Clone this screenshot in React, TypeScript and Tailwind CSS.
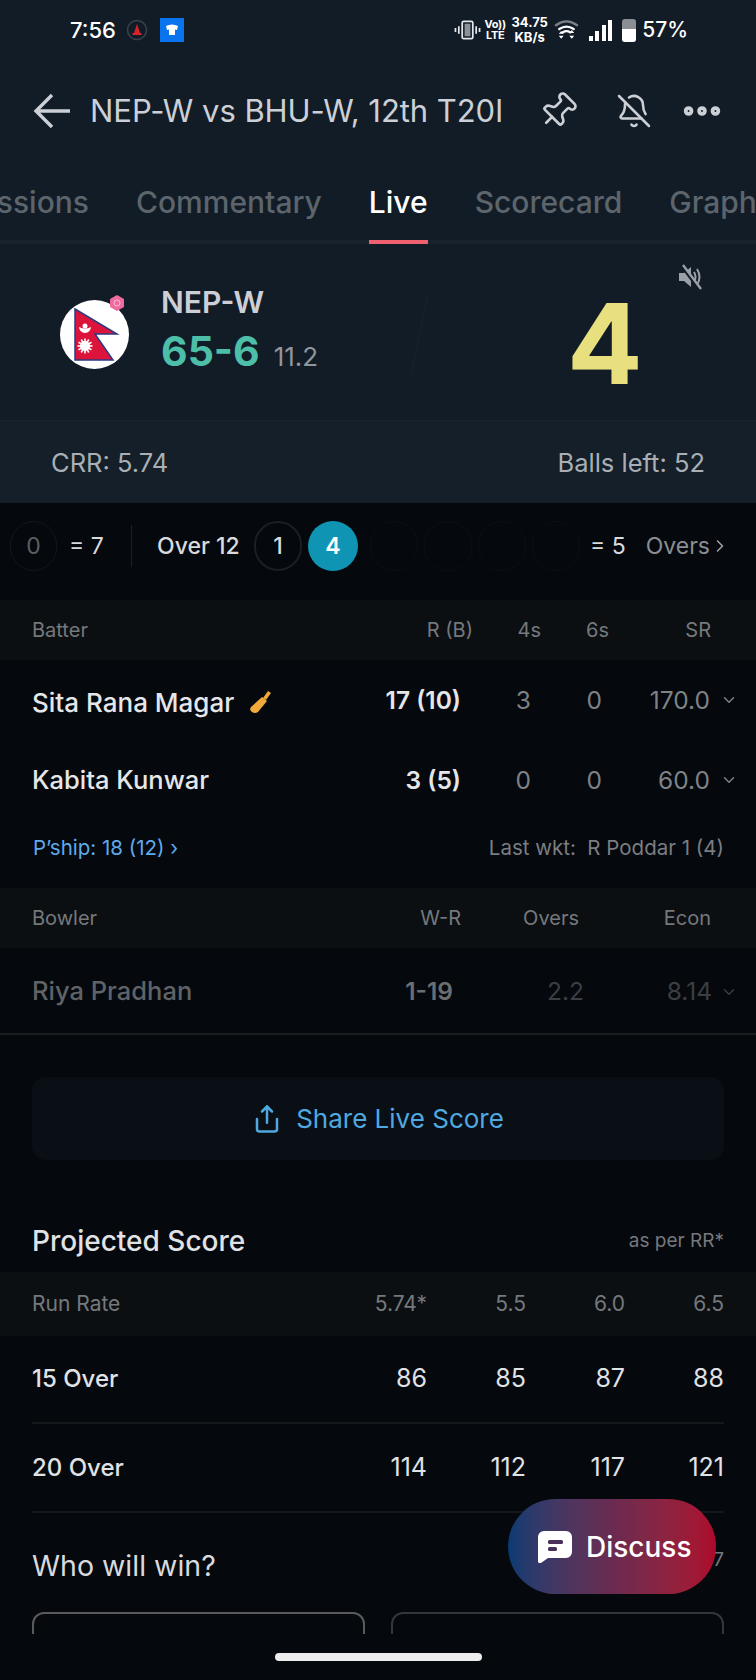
import { BellOff, ChevronDown, ChevronRight, Ellipsis, Pin, Share } from 'lucide-react';

const balls = ['a', 'b', 'c', 'd'];
const sunRays = [0, 30, 60, 90, 120, 150];

function StatusBar() {
  return (
    <div className="h-[60px] flex items-center pl-[70px] text-white">
      <span className="text-[22px] font-medium w-[56px]">7:56</span>
      <svg viewBox="0 0 22 22" className="w-[22px] h-[22px]">
        <circle cx="11" cy="11" r="9.5" fill="none" stroke="#3a424b" strokeWidth="1.5" />
        <path d="M11 5l3 9H8z" fill="#d8232f" />
        <rect x="6.5" y="14" width="9" height="2" fill="#d8232f" />
      </svg>
      <div className="ml-[12px] w-[24px] h-[24px] bg-[#0a74ee] flex items-center justify-center">
        <svg viewBox="0 0 16 16" className="w-[16px] h-[16px]">
          <path d="M2 4q6-3 12 0l-1 4-2-.5V13H5V7.500L3 8z" fill="#fff" />
        </svg>
      </div>
      <div className="flex-1" />
      {/* Vibrate */}
      <svg viewBox="0 0 28 22" className="w-[27px] h-[22px]" fill="none" stroke="#e5e7eb">
        <rect x="8.5" y="2" width="11" height="18" rx="1.5" strokeWidth="1.8" />
        <rect x="11" y="4.5" width="6" height="13" fill="#8b9198" stroke="none" />
        <path d="M5 7v8M1.5 9v4M23 7v8M26.500 9v4" strokeWidth="1.8" />
      </svg>
      <div className="ml-[4px] w-[21px] flex flex-col items-center text-[11px] leading-[11px] font-bold tracking-tight">
        <span>Vo))</span>
        <span>LTE</span>
      </div>
      <div className="ml-[5px] w-[38px] flex flex-col items-center text-[13px] leading-[15px] font-bold">
        <span>34.75</span>
        <span>KB/s</span>
      </div>
      {/* Wifi */}
      <svg viewBox="0 0 26 24" className="ml-[5px] w-[25px] h-[24px]" fill="none" strokeLinecap="round">
        <path d="M2 7q11-8 22 0" stroke="#7b8087" strokeWidth="2.4" />
        <path d="M5.5 11q7.500-5 15 0" stroke="#fff" strokeWidth="2.4" />
        <path d="M9 14.500q4-2.500 8 0" stroke="#fff" strokeWidth="2.400" />
        <path d="M5 17l2.500-3 2.500 3zM5 19h5l-2.500 3zM16 16h5l-2.500-3zM16 19h5l-2.500 3z" fill="#fff" transform="translate(0 -1)" />
      </svg>
      {/* Signal */}
      <div className="ml-[10px] flex items-end gap-[2.5px] h-[22px]">
        <div className="w-[4px] h-[5px] bg-white" />
        <div className="w-[4px] h-[10px] bg-white" />
        <div className="w-[4px] h-[16px] bg-white" />
        <div className="w-[4px] h-[21px] bg-white" />
      </div>
      <div className="ml-[10px] w-[14px] h-[23px] rounded-[3px] bg-[#8b8f94] flex flex-col justify-end overflow-hidden">
        <div className="h-[13px] bg-white" />
      </div>
      <span className="ml-[6px] mr-[68px] text-[21px] font-medium">57%</span>
    </div>
  );
}

function Toolbar() {
  return (
    <div className="h-[102px] flex items-center pl-[33px] text-[#ccd0d6]">
      <svg viewBox="0 0 38 36" className="w-[38px] h-[36px] shrink-0" fill="none" stroke="currentColor" strokeWidth="3.4">
        <path d="M37 18H4M19 2L3 18l16 16" />
      </svg>
      <span className="ml-[19px] text-[31px] tracking-[-0.05px] whitespace-nowrap">NEP-W vs BHU-W, 12th T20I</span>
      <Pin className="ml-[35px] w-[40px] h-[40px] rotate-45 shrink-0" strokeWidth={1.6} />
      <BellOff className="ml-[38px] w-[36px] h-[36px] shrink-0" strokeWidth={1.7} />
      <Ellipsis className="ml-[27px] w-[46px] h-[46px] shrink-0" strokeWidth={3} />
    </div>
  );
}

function Tabs() {
  return (
    <div className="h-[82px] flex overflow-hidden whitespace-nowrap text-[30px] font-medium text-[#5c646c] shadow-[inset_0_-4px_0_#17222c]">
      <div className="w-[89px] shrink-0 flex justify-end items-center pb-[2px]">
        <span>ssions</span>
      </div>
      <div className="ml-[47px] flex items-center pb-[2px]">Commentary</div>
      <div className="relative ml-[47px] flex items-center pb-[2px] text-white">
        Live
        <div className="absolute left-0 right-0 bottom-0 h-[4px] bg-[#f0616f]" />
      </div>
      <div className="ml-[47px] flex items-center pb-[2px]">Scorecard</div>
      <div className="ml-[47px] flex items-center pb-[2px]">Graphs</div>
    </div>
  );
}

function NepalLogo() {
  return (
    <div className="relative w-[69px] h-[69px] rounded-full bg-white flex items-center justify-center">
      <svg viewBox="0 0 69 69" className="w-[69px] h-[69px]">
        <path d="M15 9 L57 34 H35 L53 60 H15 Z" fill="#dc143c" stroke="#2a3a80" strokeWidth="1.5" />
        <path d="M19 27a6 6 0 0 0 12 0q-6 3-12 0z" fill="#fff" />
        <circle cx="25" cy="26" r="2.500" fill="#fff" />
        <circle cx="25" cy="46" r="5" fill="#fff" />
        {sunRays.map((a) => (
          <rect key={a} x="24.200" y="38.500" width="1.600" height="15" fill="#fff" transform={`rotate(${a} 25 46)`} />
        ))}
      </svg>
      <svg viewBox="0 0 16 16" className="absolute -top-[5px] right-[4px] w-[16px] h-[16px]">
        <path d="M8 0l7 4v8l-7 4-7-4V4z" fill="#ef6b9f" />
        <circle cx="8" cy="8" r="3" fill="none" stroke="#f8bcd3" />
      </svg>
    </div>
  );
}

function ScoreCard() {
  return (
    <>
      <div className="relative h-[176px] flex items-start pl-[60px] pt-[56px]">
        <NepalLogo />
        <div className="ml-[32px] -mt-[16px] w-[240px]">
          <div className="text-[30px] leading-[36px] font-semibold text-[#ccd0d6]">NEP-W</div>
          <div className="mt-[6px] flex items-baseline">
            <span className="text-[41px] leading-[50px] font-bold text-[#4dbfa9]">65-6</span>
            <span className="ml-[14px] text-[26px] text-[#8f969d]">11.2</span>
          </div>
        </div>
        <div className="ml-[18px] mt-[-5px] w-[1px] h-[80px] bg-[#18232d] rotate-[12deg]" />
        <div className="ml-[147px] -mt-[22px] text-[112px] leading-[130px] font-bold text-[#e8e07f]">4</div>
        {/* Muted speaker */}
        <svg viewBox="0 0 26 26" className="absolute top-[20px] left-[677px] w-[26px] h-[26px]" fill="none" stroke="#9aa0a6" strokeWidth="2">
          <path d="M2 9h5l7-6v20l-7-6H2z" fill="#9aa0a6" stroke="none" />
          <path d="M17 8q3 5 0 10M20 5q5 8 0 16" />
          <path d="M3.500 1l18 24" stroke="#121c26" strokeWidth="2.400" />
          <path d="M6 1l18 24" strokeWidth="2.400" />
        </svg>
      </div>
      <div className="h-[83px] bg-[#141f29] border-t border-[#17222c] flex items-center justify-between pt-[2px] pl-[51px] pr-[51px] text-[25.5px] text-[#a9afb5]">
        <span>CRR: 5.74</span>
        <span>Balls left: 52</span>
      </div>
    </>
  );
}

function OverRow() {
  return (
    <div className="h-[97px] flex items-center pb-[11px] pl-[10px] text-[23px] text-[#d8dade] overflow-hidden">
      <div className="w-[47px] h-[50px] rounded-full border border-[#14171a] flex items-center justify-center text-[#5c6064]">0</div>
      <span className="ml-[12px] w-[44px] whitespace-nowrap">= 7</span>
      <div className="ml-[18px] w-[1px] h-[42px] bg-[#1c2024]" />
      <span className="ml-[25px] w-[97px] font-medium whitespace-nowrap">Over 12</span>
      <div className="w-[48px] h-[50px] rounded-full border-2 border-[#1b1f23] flex items-center justify-center font-medium">1</div>
      <div className="ml-[6px] w-[50px] h-[50px] rounded-full bg-[#0f94b4] flex items-center justify-center font-semibold text-white">4</div>
      <div className="ml-[12px] flex gap-[6px]">
        {balls.map((b) => (
          <div key={b} className="w-[48px] h-[50px] rounded-full border border-[#0c0f12]" />
        ))}
      </div>
      <span className="ml-[10px] whitespace-nowrap">= 5</span>
      <span className="ml-[20px] text-[#8a8e92] whitespace-nowrap">Overs</span>
      <ChevronRight className="w-[20px] h-[24px] text-[#9a9ea2]" />
    </div>
  );
}

function Batters() {
  return (
    <>
      <div className="h-[60px] bg-[#0c0f12] flex items-center pl-[32px] pr-[45px] text-[20px] text-[#75797d]">
        <span className="flex-1">Batter</span>
        <span className="w-[80px] text-right">R (B)</span>
        <span className="w-[68px] text-right">4s</span>
        <span className="w-[68px] text-right">6s</span>
        <span className="w-[102px] text-right">SR</span>
      </div>
      <BatterRow name="Sita Rana Magar" onStrike score="17 (10)" fours="3" sixes="0" rate="170.0" />
      <BatterRow name="Kabita Kunwar" score="3 (5)" fours="0" sixes="0" rate="60.0" />
      <div className="h-[68px] flex items-center justify-between pb-[12px] pl-[33px] pr-[32px] text-[20.5px]">
        <span className="text-[#5eaaeb]">P’ship: 18 (12) ›</span>
        <span className="text-[#7a7e82]">Last wkt:&nbsp; R Poddar 1 (4)</span>
      </div>
    </>
  );
}

function BatterRow({ name, onStrike, score, fours, sixes, rate }: { name: string; onStrike?: boolean; score: string; fours: string; sixes: string; rate: string }) {
  return (
    <div className="h-[80px] flex items-center pl-[32px] pr-[18px] text-[24.5px]">
      <div className={`flex-1 flex items-center font-medium text-[#e4e6e9] whitespace-nowrap ${onStrike ? 'text-[26px] pt-[4px]' : 'text-[25.5px]'}`}>
        {name}
        {onStrike && (
          <svg viewBox="0 0 24 24" className="ml-[14px] w-[24px] h-[24px]">
            <path d="M20 1l3 2-5 7-3-2z" fill="#f0a93a" />
            <path d="M14 7l5 4-9 11q-3 2-6 0t-1-5z" fill="#f0a93a" />
          </svg>
        )}
      </div>
      <span className="w-[100px] text-right font-semibold text-[#e4e6e9] whitespace-nowrap">{score}</span>
      <span className="w-[70px] text-right text-[#7e8286]">{fours}</span>
      <span className="w-[71px] text-right text-[#7e8286]">{sixes}</span>
      <span className="w-[108px] text-right text-[#7e8286]">{rate}</span>
      <ChevronDown className="ml-[10px] w-[18px] h-[18px] text-[#7e8286]" />
    </div>
  );
}

function Bowlers() {
  return (
    <>
      <div className="h-[60px] bg-[#0c0f12] flex items-center pl-[32px] pr-[45px] text-[20px] text-[#75797d]">
        <span className="flex-1">Bowler</span>
        <span className="w-[84px] text-right">W-R</span>
        <span className="w-[118px] text-right">Overs</span>
        <span className="w-[132px] text-right">Econ</span>
      </div>
      <div className="h-[87px] flex items-center pt-[2px] pl-[32px] pr-[18px] text-[24.5px] border-b-2 border-[#1a1d20]">
        <span className="flex-1 text-[25.5px] font-medium text-[#5f6367]">Riya Pradhan</span>
        <span className="w-[80px] text-right font-semibold text-[#6a6e72] mr-[16px]">1-19</span>
        <span className="w-[115px] text-right text-[#3b3f43]">2.2</span>
        <span className="w-[128px] text-right text-[#3b3f43]">8.14</span>
        <ChevronDown className="ml-[8px] w-[18px] h-[18px] text-[#3b3f43]" />
      </div>
    </>
  );
}

function ProjectedScore() {
  const cols = 'w-[99px] text-right';
  return (
    <>
      <div className="mt-[55px] h-[57px] flex items-center justify-between px-[32px] pb-[5px]">
        <span className="text-[28px] font-medium text-[#e0e2e5]">Projected Score</span>
        <span className="text-[19px] text-[#75797d]">as per RR*</span>
      </div>
      <div className="h-[64px] bg-[#0c0f12] flex items-center px-[32px] text-[21px] text-[#75797d]">
        <span className="flex-1">Run Rate</span>
        <span className={cols}>5.74*</span>
        <span className={cols}>5.5</span>
        <span className={cols}>6.0</span>
        <span className={cols}>6.5</span>
      </div>
      <div className="mx-[32px]">
        <div className="h-[88px] flex items-center text-[25px] text-[#e0e2e5] border-b-2 border-[#15181b]">
          <span className="flex-1 text-[24px] font-medium">15 Over</span>
          <span className={cols}>86</span>
          <span className={cols}>85</span>
          <span className={cols}>87</span>
          <span className={cols}>88</span>
        </div>
        <div className="h-[89px] flex items-center text-[25px] text-[#e0e2e5] border-b-2 border-[#15181b]">
          <span className="flex-1 text-[24px] font-medium">20 Over</span>
          <span className={cols}>114</span>
          <span className={cols}>112</span>
          <span className={cols}>117</span>
          <span className={cols}>121</span>
        </div>
      </div>
    </>
  );
}

function WhoWillWin() {
  return (
    <>
      <div className="h-[99px] flex items-center justify-between px-[32px] pt-[7px]">
        <span className="text-[28.5px] text-[#d8dade]">Who will win?</span>
        <span className="text-[19px] text-[#75797d] -mt-[12px]">7</span>
      </div>
      <div className="h-[22px] overflow-hidden flex gap-[26px] px-[32px]">
        <div className="w-[333px] h-[60px] rounded-[12px] border-2 border-[#5a5a5c]" />
        <div className="w-[333px] h-[60px] rounded-[12px] border-2 border-[#33363a]" />
      </div>
    </>
  );
}

export default function App() {
  return (
    <div
      className="relative w-[756px] h-[1680px] overflow-hidden bg-[#05080c]"
      style={{ fontFamily: 'Inter, "Liberation Sans", sans-serif' }}
    >
      <div className="bg-[#121c26]">
        <StatusBar />
        <Toolbar />
        <Tabs />
        <ScoreCard />
      </div>
      <OverRow />
      <Batters />
      <Bowlers />

      {/* Share button */}
      <div className="mt-[42px] mx-[32px] h-[83px] rounded-[14px] bg-[#0a0f16] flex items-center justify-center gap-[14px] text-[26px] text-[#4fa9e0]">
        <Share className="w-[30px] h-[30px]" strokeWidth={2} />
        <span>Share Live Score</span>
      </div>

      <ProjectedScore />
      <WhoWillWin />

      {/* Home indicator */}
      <div className="h-[46px] pt-[19px] flex justify-center bg-[#05080c]">
        <div className="w-[207px] h-[8px] rounded-full bg-[#ededed]" />
      </div>

      {/* Discuss button */}
      <div className="absolute left-[508px] top-[1499px] w-[208px] h-[95px] rounded-full bg-gradient-to-r from-[#053b73] via-[#6a2a50] to-[#ad082c] flex items-center pl-[30px] gap-[14px] text-white">
        <svg viewBox="0 0 34 32" className="w-[34px] h-[32px]">
          <path d="M6 0h22a6 6 0 0 1 6 6v15a6 6 0 0 1-6 6H10l-7 5q-3 1-3-2V6a6 6 0 0 1 6-6z" fill="#fff" />
          <rect x="10" y="9" width="15" height="4" rx="1.500" fill="#4a2f5a" />
          <rect x="10" y="16" width="9" height="4" rx="1.500" fill="#4a2f5a" />
        </svg>
        <span className="text-[28px] font-medium">Discuss</span>
      </div>
    </div>
  );
}
